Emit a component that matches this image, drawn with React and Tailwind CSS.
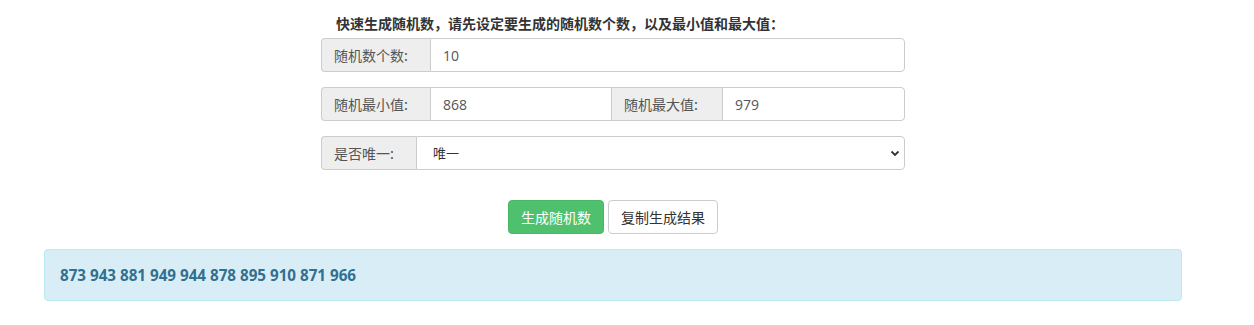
import React, { useState } from "react";

// Random number generator form (bootstrap-ish look)
const cjk = "font-['Microsoft_YaHei','Noto_Sans_CJK_SC',sans-serif]";

const Addon = ({ children, className = "" }) => (
    <span
        className={`flex items-center px-3 bg-[#eeeeee] border border-[#cccccc] text-[14px] text-[#555555] ${className}`}
    >
        {children}
    </span>
);

const App = () => {
    const [count, setCount] = useState("10");
    const [min, setMin] = useState("868");
    const [max, setMax] = useState("979");
    const [unique, setUnique] = useState("1");
    const result = "873 943 881 949 944 878 895 910 871 966";

    return (
        <div className={`bg-white min-h-[325px] pt-[13px] pl-[44px] ${cjk}`}>
            <div className="w-[1138px]">
                <div className="w-[584px] mx-auto">
                    <p className="pl-[15px] text-[14px] leading-[20px] font-bold text-[#333333]">
                        快速生成随机数，请先设定要生成的随机数个数，以及最小值和最大值：
                    </p>

                    {/* count */}
                    <div className="flex h-[34px] mt-[5px]">
                        <Addon className="w-[109px] rounded-l-[4px] border-r-0">随机数个数:</Addon>
                        <input
                            value={count}
                            onChange={(e) => setCount(e.target.value)}
                            className="flex-1 min-w-0 px-3 border border-[#cccccc] rounded-r-[4px] text-[14px] text-[#555555] font-['Open_Sans','Noto_Sans_CJK_SC',sans-serif] outline-none"
                        />
                    </div>

                    {/* min / max */}
                    <div className="flex h-[34px] mt-[15px]">
                        <Addon className="w-[109px] rounded-l-[4px] border-r-0">随机最小值:</Addon>
                        <input
                            value={min}
                            onChange={(e) => setMin(e.target.value)}
                            className="w-[182px] px-3 border border-[#cccccc] text-[14px] text-[#555555] font-['Open_Sans','Noto_Sans_CJK_SC',sans-serif] outline-none"
                        />
                        <Addon className="w-[110px] border-l-0 border-r-0">随机最大值:</Addon>
                        <input
                            value={max}
                            onChange={(e) => setMax(e.target.value)}
                            className="flex-1 min-w-0 px-3 border border-[#cccccc] rounded-r-[4px] text-[14px] text-[#555555] font-['Open_Sans','Noto_Sans_CJK_SC',sans-serif] outline-none"
                        />
                    </div>

                    {/* unique */}
                    <div className="flex h-[34px] mt-[15px]">
                        <Addon className="w-[95px] rounded-l-[4px] border-r-0">是否唯一:</Addon>
                        <div className="relative flex-1">
                            <select
                                value={unique}
                                onChange={(e) => setUnique(e.target.value)}
                                className={`appearance-none w-full h-full pl-[16px] pr-8 bg-white border border-[#cccccc] rounded-r-[4px] text-[13px] text-[#333333] outline-none ${cjk}`}
                            >
                                <option value="1">唯一</option>
                                <option value="0">不唯一</option>
                            </select>
                            <svg
                                className="absolute right-[5px] top-1/2 -translate-y-1/2 w-[10px] h-[10px] pointer-events-none"
                                viewBox="0 0 10 10"
                            >
                                <path d="M1.5 3.5 L5 7 L8.5 3.5" fill="none" stroke="#333" strokeWidth="1.8" />
                            </svg>
                        </div>
                    </div>

                    {/* buttons */}
                    <div className="flex justify-center gap-[4px] mt-[30px]">
                        <button className="h-[34px] w-[96px] rounded-[4px] bg-[#4fc16e] border border-[#48b865] text-white text-[14px]">
                            生成随机数
                        </button>
                        <button className="h-[34px] w-[110px] rounded-[4px] bg-white border border-[#cccccc] text-[#333333] text-[14px]">
                            复制生成结果
                        </button>
                    </div>
                </div>

                {/* result */}
                <div className="mt-[15px] h-[52px] flex items-center px-[15px] bg-[#d9edf7] border border-[#bce8f1] rounded-[4px]">
                    <span className="text-[15.2px] font-bold text-[#31708f] font-['Open_Sans',sans-serif]">
                        {result}
                    </span>
                </div>
            </div>
        </div>
    );
};

export default App;
